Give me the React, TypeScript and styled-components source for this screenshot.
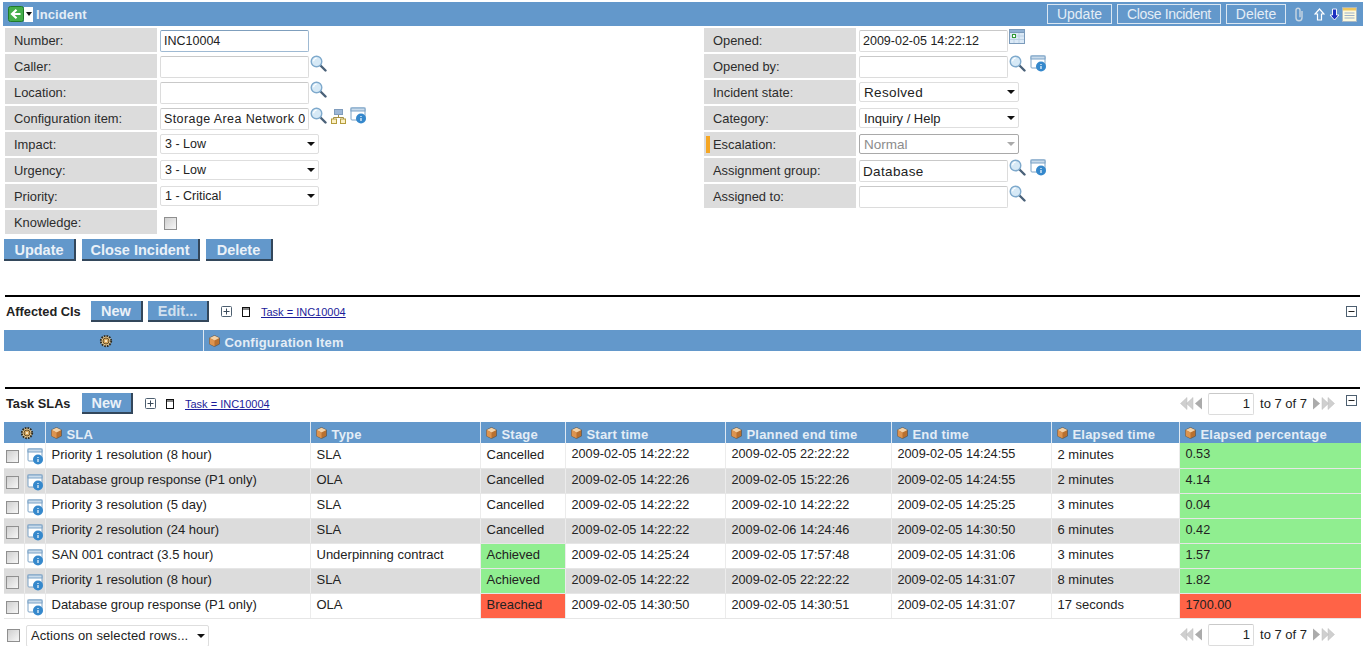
import React from "react";
import styled, { createGlobalStyle } from "styled-components";

const Global = createGlobalStyle`
  html, body { margin: 0; padding: 0; background: #fff; overflow: hidden; height: 646px; }
  body { font-family: "Liberation Sans", Arial, sans-serif; font-size: 13px; color: #222; }
  * { box-sizing: border-box; }
`;

const BLUE = "#6398cb";
const HEAD_TEXT = "#e4edf6";

const Page = styled.div`
  width: 1363px;
  height: 646px;
  padding-top: 2px;
  overflow: hidden;
`;

const Header = styled.div`
  display: flex;
  align-items: center;
  height: 24px;
  margin-left: 3px;
  padding-left: 5px;
  background: ${BLUE};
`;
const HeaderTitle = styled.span`
  margin-left: 3px;
  color: ${HEAD_TEXT};
  font-weight: bold;
  font-size: 13px;
  letter-spacing: 0.1px;
`;
const MenuCaret = styled.span`
  display: flex;
  align-items: center;
  justify-content: center;
  width: 9px;
  height: 15px;
  background: #fff;
  &::after {
    content: "";
    border-left: 3px solid transparent;
    border-right: 3px solid transparent;
    border-top: 4px solid #111;
  }
`;
const HeaderActions = styled.div`
  display: flex;
  align-items: center;
  margin-left: auto;
  gap: 5px;
`;
const HeaderButton = styled.button<{ $w: number; $ls?: number }>`
  height: 20px;
  padding: 1px 0 0;
  width: ${(p) => p.$w}px;
  background: ${BLUE};
  border: 1px solid #dbe7f2;
  color: ${HEAD_TEXT};
  font: 14px "Liberation Sans", Arial, sans-serif;
  letter-spacing: ${(p) => p.$ls ?? 0}px;
  line-height: 17px;
`;
const HeaderIcons = styled.div`
  display: flex;
  align-items: center;
  width: 72px;
  height: 24px;
`;
const IconSlot = styled.span<{ $ml?: number; $mt?: number }>`
  display: inline-flex;
  margin-left: ${(p) => p.$ml ?? 0}px;
  margin-top: ${(p) => p.$mt ?? 0}px;
`;

const FormGrid = styled.div`
  display: grid;
  grid-template-columns: 699px 1fr;
  margin: 2px 0 0 5px;
`;
const FormColumn = styled.div`
  display: flex;
  flex-direction: column;
`;
const Row = styled.div`
  display: flex;
  height: 26px;
  align-items: flex-start;
`;
const Label = styled.div<{ $mark?: boolean }>`
  display: flex;
  align-items: center;
  flex: 0 0 152px;
  height: 24px;
  padding-left: ${(p) => (p.$mark ? 2 : 9)}px;
  padding-top: 1px;
  background: #dcdcdc;
  color: #2c2c2c;
  font-size: 12.9px;
`;
const Mark = styled.span`
  width: 4px;
  height: 17px;
  margin-right: 3px;
  background: #f5a623;
`;
const Field = styled.div`
  display: flex;
  align-items: flex-start;
  margin-left: 3px;
  padding-top: 2px;
`;
const TextInput = styled.input<{ $focus?: boolean; $right?: boolean; $w?: number; $fs?: number; $ls?: number }>`
  width: ${(p) => p.$w ?? 149}px;
  height: 22px;
  padding: 0 3px 0 3px;
  border: 1px solid #dcdcdc;
  border-top-color: #c9c9c9;
  ${(p) => p.$focus && "border-color: #9fbad3; border-top-color: #7f9fbd;"}
  border-radius: 2px;
  background: #fff;
  color: #222;
  font: ${(p) => p.$fs ?? 12.5}px "Liberation Sans", Arial, sans-serif;
  letter-spacing: ${(p) => p.$ls ?? 0}px;
  text-align: ${(p) => (p.$right ? "right" : "left")};
  outline: none;
`;
const FieldIcons = styled.div`
  display: flex;
  align-items: flex-start;
  gap: 4px;
  margin-left: 1px;
  margin-top: -1px;
`;
const SelectBox = styled.div<{ $w?: number; $h?: number; $disabled?: boolean; $fs?: number; $ls?: number }>`
  display: flex;
  align-items: center;
  width: ${(p) => p.$w ?? 160}px;
  height: ${(p) => p.$h ?? 20}px;
  padding: 0 3px 0 4px;
  border: 1px solid ${(p) => (p.$disabled ? "#a9a9a9" : "#dedede")};
  border-radius: 2px;
  background: #fff;
  color: ${(p) => (p.$disabled ? "#8c8c8c" : "#222")};
  font-size: ${(p) => p.$fs ?? 12.5}px;
  letter-spacing: ${(p) => p.$ls ?? 0}px;
  white-space: nowrap;
  &::after {
    content: "";
    margin-left: auto;
    border-left: 4px solid transparent;
    border-right: 4px solid transparent;
    border-top: 4px solid ${(p) => (p.$disabled ? "#aaa" : "#111")};
  }
`;
const Check = styled.span<{ $ml?: number; $mt?: number }>`
  display: block;
  flex: none;
  width: 13px;
  height: 13px;
  margin-left: ${(p) => p.$ml ?? 0}px;
  margin-top: ${(p) => p.$mt ?? 0}px;
  border: 1px solid #8f8f8f;
  background: linear-gradient(135deg, #cfcfcf, #f7f7f7);
`;

const FormButtons = styled.div`
  display: flex;
  gap: 6px;
  margin: 3px 0 0 4px;
`;
const BlueButton = styled.button<{ $w: number; $h?: number; $muted?: boolean }>`
  width: ${(p) => p.$w}px;
  height: ${(p) => p.$h ?? 22}px;
  padding: 1px 0 0;
  background: ${BLUE};
  border: 0;
  border-right: 2px solid #33475b;
  border-bottom: 2px solid #33475b;
  color: ${(p) => (p.$muted ? "#d2e0ee" : "#eaf1f8")};
  font: bold 14.5px "Liberation Sans", Arial, sans-serif;
`;

const Section = styled.section<{ $mt: number }>`
  margin-top: ${(p) => p.$mt}px;
`;
const Rule = styled.div`
  height: 2px;
  margin: 0 3px 0 5px;
  background: #000;
`;
const Toolbar = styled.div`
  display: flex;
  align-items: center;
  height: 33px;
  padding: 0 6px 4px 6px;
`;
const ToolbarTitle = styled.span<{ $w: number }>`
  flex: 0 0 ${(p) => p.$w}px;
  font-weight: bold;
  font-size: 12.8px;
  color: #222;
`;
const ToolbarButtons = styled.div`
  display: flex;
  gap: 5px;
  margin-right: 12px;
`;
const ToolTools = styled.div`
  display: flex;
  align-items: center;
  gap: 10px;
`;
const FilterLink = styled.a`
  margin-left: 1px;
  color: #1c1c9a;
  font-size: 11px;
  text-decoration: underline;
`;
const ToolbarEnd = styled.div`
  display: flex;
  align-items: center;
  margin-left: auto;
`;
const Pager = styled.div`
  display: flex;
  align-items: center;
  font-size: 13px;
`;
const PagerText = styled.span`
  margin: 0 6px;
  color: #222;
`;
const Collapse = styled.span<{ $mt?: number }>`
  display: inline-flex;
  margin-left: 11px;
  margin-top: ${(p) => p.$mt ?? 0}px;
`;

const Table = styled.table`
  width: 1357px;
  margin-left: 4px;
  border-collapse: collapse;
  table-layout: fixed;
`;
const Th = styled.th<{ $center?: boolean }>`
  height: 21px;
  padding: 0 0 0 5px;
  background: ${BLUE};
  border-left: 1px solid #dfe9f3;
  color: ${HEAD_TEXT};
  font-size: 13px;
  font-weight: bold;
  text-align: ${(p) => (p.$center ? "center" : "left")};
  white-space: nowrap;
  letter-spacing: 0.2px;
  &:first-child { border-left: 0; }
`;
const HeadInner = styled.span`
  display: flex;
  align-items: flex-start;
  gap: 5px;
`;
const HeadText = styled.span`
  margin-top: 4px;
  line-height: 15px;
`;
const GearWrap = styled.span`
  display: flex;
  justify-content: center;
`;
const Tr = styled.tr<{ $alt: boolean }>`
  background: ${(p) => (p.$alt ? "#dcdcdc" : "#fff")};
`;
const Td = styled.td<{ $tone?: "ok" | "bad"; $num?: boolean }>`
  height: 25px;
  padding: 0 0 2px 6px;
  border-left: 1px solid #ececec;
  border-bottom: 1px solid #e6e6e6;
  font-size: ${(p) => (p.$num ? 12.7 : 13)}px;
  color: #222;
  white-space: nowrap;
  overflow: hidden;
  background: ${(p) => (p.$tone === "ok" ? "#90ee90" : p.$tone === "bad" ? "#ff6347" : "transparent")};
`;
const IconTd = styled.td`
  height: 25px;
  padding: 5px 0 0 2px;
  vertical-align: top;
  border-left: 1px solid #ececec;
  border-bottom: 1px solid #e6e6e6;
`;
const CheckTd = styled.td`
  height: 25px;
  padding: 7px 0 0 2px;
  vertical-align: top;
  border-bottom: 1px solid #e6e6e6;
`;
const Footer = styled.div`
  display: flex;
  align-items: flex-start;
  padding: 6px 28px 0 7px;
`;
const BottomPager = styled.div`
  margin-left: auto;
  margin-top: -1px;
`;

const Svg = styled.svg`
  display: block;
  flex: none;
`;

const Magnifier = () => (
  <Svg width="17" height="17" viewBox="0 0 17 17">
    <path d="M10.5 10.5l5 5" stroke="#4a6178" strokeWidth="2.4" strokeLinecap="round" />
    <circle cx="6.5" cy="6.5" r="5.3" fill="#d6e9f6" stroke="#7ea9cc" strokeWidth="1.4" />
    <path d="M3.6 6.2a3 3 0 0 1 3-3" stroke="#fff" strokeWidth="1.2" fill="none" />
  </Svg>
);
const InfoWindow = () => (
  <Svg width="17" height="17" viewBox="0 0 17 17">
    <rect x="1" y="1" width="14" height="12" rx="1" fill="#fff" stroke="#7ba2c6" />
    <rect x="1" y="1" width="14" height="3" fill="#c9dbeb" stroke="#7ba2c6" />
    <circle cx="11" cy="11.5" r="5" fill="#3588cc" />
    <path d="M11 9v1M11 11v3" stroke="#e8f3fb" strokeWidth="1.3" />
  </Svg>
);
const Tree = () => (
  <Svg width="15" height="15" viewBox="0 0 15 15">
    <rect x="3.5" y="0.5" width="8" height="5" fill="#9db7d6" stroke="#7f9cbd" />
    <path d="M7.5 6v2.5M2.5 10.5v-2h10v2" fill="none" stroke="#a38f45" />
    <rect x="0.5" y="10" width="5" height="4.5" fill="#fbf0c4" stroke="#b59c3c" />
    <rect x="9.5" y="10" width="5" height="4.5" fill="#fbf0c4" stroke="#b59c3c" />
  </Svg>
);
const Calendar = () => (
  <Svg width="16" height="16" viewBox="0 0 16 16">
    <rect x="0.5" y="0.5" width="15" height="14" fill="#dbe9f6" stroke="#7b9bbb" />
    <rect x="0.5" y="0.5" width="15" height="3" fill="#8fb0d2" stroke="#7b9bbb" />
    <path d="M1 7h14M1 10.5h14M5 4v10M10 4v10" stroke="#bdd2e5" />
    <rect x="3.5" y="5.5" width="3" height="3" fill="#fff" stroke="#2f9a35" />
  </Svg>
);
const Cube = () => (
  <Svg width="11" height="12" viewBox="0 0 10 11">
    <path d="M5 .4l4.6 2.3v5.6L5 10.6.4 8.3V2.7z" fill="#b9702f" stroke="#5c5a56" strokeWidth=".7" />
    <path d="M.6 2.7L5 5l4.4-2.3L5 .6z" fill="#f3d2a8" />
    <path d="M5 5v5.4L.6 8.2V2.7z" fill="#dd9450" />
  </Svg>
);
const Gear = () => (
  <Svg width="14" height="14" viewBox="0 0 13 13">
    <circle cx="6.5" cy="6.5" r="4.8" fill="#e6c890" stroke="#2e2a20" strokeWidth="1.8" strokeDasharray="1.5 1" />
    <circle cx="6.5" cy="6.5" r="2.8" fill="#d7a860" stroke="#55401d" strokeWidth=".8" />
    <circle cx="6.5" cy="6.5" r="1" fill="#fff2d6" />
  </Svg>
);
const BackArrow = () => (
  <Svg width="16" height="16" viewBox="0 0 16 16">
    <rect x="0.5" y="0.5" width="15" height="15" rx="2" fill="#44ad4a" stroke="#1f7a2a" />
    <path d="M12.5 8H5M8.5 3.8L4 8l4.5 4.2" fill="none" stroke="#fff" strokeWidth="2.2" />
  </Svg>
);
const Paperclip = () => (
  <Svg width="10" height="15" viewBox="0 0 10 15">
    <path d="M8 4v6.8a3 3 0 0 1-6 0V3.2a2 2 0 0 1 4 0v7" fill="none" stroke="#c9d6e2" strokeWidth="1.4" />
  </Svg>
);
const ArrowUp = () => (
  <Svg width="11" height="13" viewBox="0 0 11 13">
    <path d="M5.5 1L1 6h2.5v6h4V6H10z" fill="#6d9dcc" stroke="#fff" strokeWidth="1.2" />
  </Svg>
);
const ArrowDown = () => (
  <Svg width="11" height="13" viewBox="0 0 11 13">
    <path d="M5.5 12L1 7h2.5V1h4v6H10z" fill="#1a2fc0" stroke="#eef4f9" strokeWidth="1" />
  </Svg>
);
const Notes = () => (
  <Svg width="15" height="15" viewBox="0 0 15 15">
    <rect x="0.5" y="0.5" width="14" height="14" fill="#fdf9dc" stroke="#a9b8c4" />
    <rect x="1" y="1" width="13" height="2.5" fill="#efc65f" />
    <path d="M2.5 6h10M2.5 8.5h10M2.5 11h10" stroke="#9db1c8" />
  </Svg>
);
const PlusBox = () => (
  <Svg width="11" height="11" viewBox="0 0 11 11">
    <rect x="0.5" y="0.5" width="10" height="10" rx="1" fill="#fff" stroke="#4d5f70" />
    <path d="M2.5 5.5h6M5.5 2.5v6" stroke="#3a4a5a" />
  </Svg>
);
const MinusBox = () => (
  <Svg width="11" height="11" viewBox="0 0 11 11">
    <rect x="0.5" y="0.5" width="10" height="10" fill="#fff" stroke="#4d5f70" />
    <path d="M2.5 5.5h6" stroke="#222" />
  </Svg>
);
const WindowBox = () => (
  <Svg width="8" height="10" viewBox="0 0 8 10">
    <rect x="0.5" y="0.5" width="7" height="9" fill="#fff" stroke="#111" />
    <path d="M0 2h8" stroke="#111" />
  </Svg>
);
const PagerArrows = ({ dir }: { dir: "back" | "forward" }) => (
  <Svg width="22" height="13" viewBox="0 0 22 13">
    <g transform={dir === "forward" ? "translate(22 0) scale(-1 1)" : undefined}>
      <path d="M7 .5L.5 6.5 7 12.5zM13 .5L6.5 6.5 13 12.5z" fill="#cfcfcf" stroke="#bcbcbc" strokeWidth=".5" />
      <path d="M22 .5L15 6.5l7 6z" fill="#ababab" />
    </g>
  </Svg>
);

type LeftRow = { label: string; kind: "input" | "select" | "check"; value?: string; focus?: boolean; ls?: number; icons?: React.ReactNode[] };
const leftRows: LeftRow[] = [
  { label: "Number:", kind: "input", value: "INC10004", focus: true },
  { label: "Caller:", kind: "input", value: "", icons: [<Magnifier key="m" />] },
  { label: "Location:", kind: "input", value: "", icons: [<Magnifier key="m" />] },
  {
    label: "Configuration item:",
    kind: "input",
    value: "Storage Area Network 001",
    ls: 0.4,
    icons: [<Magnifier key="m" />, <IconSlot key="t" $mt={2}><Tree /></IconSlot>, <InfoWindow key="i" />],
  },
  { label: "Impact:", kind: "select", value: "3 - Low" },
  { label: "Urgency:", kind: "select", value: "3 - Low" },
  { label: "Priority:", kind: "select", value: "1 - Critical" },
  { label: "Knowledge:", kind: "check" },
];
type RightRow = { label: string; kind: "input" | "select"; value: string; mark?: boolean; disabled?: boolean; fs?: number; ls?: number; icons?: React.ReactNode[] };
const rightRows: RightRow[] = [
  { label: "Opened:", kind: "input", value: "2009-02-05 14:22:12", icons: [<Calendar key="c" />] },
  { label: "Opened by:", kind: "input", value: "", icons: [<Magnifier key="m" />, <InfoWindow key="i" />] },
  { label: "Incident state:", kind: "select", value: "Resolved", fs: 13.5, ls: 0.35 },
  { label: "Category:", kind: "select", value: "Inquiry / Help", fs: 13 },
  { label: "Escalation:", kind: "select", value: "Normal", mark: true, disabled: true, fs: 13.5 },
  { label: "Assignment group:", kind: "input", value: "Database", fs: 13.5, ls: 0.35, icons: [<Magnifier key="m" />, <InfoWindow key="i" />] },
  { label: "Assigned to:", kind: "input", value: "", icons: [<Magnifier key="m" />] },
];

const columns = [
  { title: "SLA", w: 265 },
  { title: "Type", w: 170 },
  { title: "Stage", w: 85 },
  { title: "Start time", w: 160 },
  { title: "Planned end time", w: 166 },
  { title: "End time", w: 160 },
  { title: "Elapsed time", w: 128 },
  { title: "Elapsed percentage", w: 182 },
];

type Sla = { sla: string; type: string; stage: string; start: string; planned: string; end: string; elapsed: string; pct: string; stageTone?: "ok" | "bad"; pctTone: "ok" | "bad" };
const slas: Sla[] = [
  { sla: "Priority 1 resolution (8 hour)", type: "SLA", stage: "Cancelled", start: "2009-02-05 14:22:22", planned: "2009-02-05 22:22:22", end: "2009-02-05 14:24:55", elapsed: "2 minutes", pct: "0.53", pctTone: "ok" },
  { sla: "Database group response (P1 only)", type: "OLA", stage: "Cancelled", start: "2009-02-05 14:22:26", planned: "2009-02-05 15:22:26", end: "2009-02-05 14:24:55", elapsed: "2 minutes", pct: "4.14", pctTone: "ok" },
  { sla: "Priority 3 resolution (5 day)", type: "SLA", stage: "Cancelled", start: "2009-02-05 14:22:22", planned: "2009-02-10 14:22:22", end: "2009-02-05 14:25:25", elapsed: "3 minutes", pct: "0.04", pctTone: "ok" },
  { sla: "Priority 2 resolution (24 hour)", type: "SLA", stage: "Cancelled", start: "2009-02-05 14:22:22", planned: "2009-02-06 14:24:46", end: "2009-02-05 14:30:50", elapsed: "6 minutes", pct: "0.42", pctTone: "ok" },
  { sla: "SAN 001 contract (3.5 hour)", type: "Underpinning contract", stage: "Achieved", stageTone: "ok", start: "2009-02-05 14:25:24", planned: "2009-02-05 17:57:48", end: "2009-02-05 14:31:06", elapsed: "3 minutes", pct: "1.57", pctTone: "ok" },
  { sla: "Priority 1 resolution (8 hour)", type: "SLA", stage: "Achieved", stageTone: "ok", start: "2009-02-05 14:22:22", planned: "2009-02-05 22:22:22", end: "2009-02-05 14:31:07", elapsed: "8 minutes", pct: "1.82", pctTone: "ok" },
  { sla: "Database group response (P1 only)", type: "OLA", stage: "Breached", stageTone: "bad", start: "2009-02-05 14:30:50", planned: "2009-02-05 14:30:51", end: "2009-02-05 14:31:07", elapsed: "17 seconds", pct: "1700.00", pctTone: "bad" },
];

const PagerBlock = () => (
  <Pager>
    <PagerArrows dir="back" />
    <IconSlot $ml={6}>
      <TextInput $right $w={46} $fs={13} defaultValue="1" />
    </IconSlot>
    <PagerText>to 7 of 7</PagerText>
    <PagerArrows dir="forward" />
  </Pager>
);

export default function App() {
  return (
    <Page>
      <Global />
      <Header>
        <BackArrow />
        <MenuCaret />
        <HeaderTitle>Incident</HeaderTitle>
        <HeaderActions>
          <HeaderButton $w={65}>Update</HeaderButton>
          <HeaderButton $w={104} $ls={-0.35}>Close Incident</HeaderButton>
          <HeaderButton $w={60}>Delete</HeaderButton>
          <HeaderIcons>
            <IconSlot $ml={3}><Paperclip /></IconSlot>
            <IconSlot $ml={10}><ArrowUp /></IconSlot>
            <IconSlot $ml={4}><ArrowDown /></IconSlot>
            <IconSlot $ml={2}><Notes /></IconSlot>
          </HeaderIcons>
        </HeaderActions>
      </Header>

      <FormGrid>
        <FormColumn>
          {leftRows.map((r) => (
            <Row key={r.label}>
              <Label>{r.label}</Label>
              <Field>
                {r.kind === "input" && <TextInput $focus={r.focus} $ls={r.ls} defaultValue={r.value} />}
                {r.kind === "select" && <SelectBox $w={159}>{r.value}</SelectBox>}
                {r.kind === "check" && <Check $ml={4} $mt={5} />}
                {r.icons && <FieldIcons>{r.icons}</FieldIcons>}
              </Field>
            </Row>
          ))}
        </FormColumn>
        <FormColumn>
          {rightRows.map((r) => (
            <Row key={r.label}>
              <Label $mark={r.mark}>
                {r.mark && <Mark />}
                {r.label}
              </Label>
              <Field>
                {r.kind === "input" ? (
                  <TextInput $fs={r.fs} $ls={r.ls} defaultValue={r.value} />
                ) : (
                  <SelectBox $disabled={r.disabled} $fs={r.fs} $ls={r.ls}>{r.value}</SelectBox>
                )}
                {r.icons && <FieldIcons>{r.icons}</FieldIcons>}
              </Field>
            </Row>
          ))}
        </FormColumn>
      </FormGrid>

      <FormButtons>
        <BlueButton $w={72}>Update</BlueButton>
        <BlueButton $w={118}>Close Incident</BlueButton>
        <BlueButton $w={67}>Delete</BlueButton>
      </FormButtons>

      <Section $mt={34}>
        <Rule />
        <Toolbar>
          <ToolbarTitle $w={85}>Affected CIs</ToolbarTitle>
          <ToolbarButtons>
            <BlueButton $w={52} $h={21}>New</BlueButton>
            <BlueButton $w={61} $h={21} $muted>Edit...</BlueButton>
          </ToolbarButtons>
          <ToolTools>
            <PlusBox />
            <WindowBox />
            <FilterLink>Task = INC10004</FilterLink>
          </ToolTools>
          <ToolbarEnd>
            <Collapse><MinusBox /></Collapse>
          </ToolbarEnd>
        </Toolbar>
        <Table>
          <colgroup>
            <col width={199} />
            <col />
          </colgroup>
          <thead>
            <tr>
              <Th $center><GearWrap><Gear /></GearWrap></Th>
              <Th><HeadInner><IconSlot $mt={4}><Cube /></IconSlot><HeadText>Configuration Item</HeadText></HeadInner></Th>
            </tr>
          </thead>
        </Table>
      </Section>

      <Section $mt={36}>
        <Rule />
        <Toolbar>
          <ToolbarTitle $w={76}>Task SLAs</ToolbarTitle>
          <ToolbarButtons>
            <BlueButton $w={51} $h={21}>New</BlueButton>
          </ToolbarButtons>
          <ToolTools>
            <PlusBox />
            <WindowBox />
            <FilterLink>Task = INC10004</FilterLink>
          </ToolTools>
          <ToolbarEnd>
            <PagerBlock />
            <Collapse $mt={-6}><MinusBox /></Collapse>
          </ToolbarEnd>
        </Toolbar>
        <Table>
          <colgroup>
            <col width={20} />
            <col width={21} />
            {columns.map((c) => <col key={c.title} width={c.w} />)}
          </colgroup>
          <thead>
            <tr>
              <Th colSpan={2} $center><GearWrap><Gear /></GearWrap></Th>
              {columns.map((c) => (
                <Th key={c.title}>
                  <HeadInner><IconSlot $mt={4}><Cube /></IconSlot><HeadText>{c.title}</HeadText></HeadInner>
                </Th>
              ))}
            </tr>
          </thead>
          <tbody>
            {slas.map((s, i) => (
              <Tr key={i} $alt={i % 2 === 1}>
                <CheckTd><Check /></CheckTd>
                <IconTd><InfoWindow /></IconTd>
                <Td>{s.sla}</Td>
                <Td>{s.type}</Td>
                <Td $tone={s.stageTone}>{s.stage}</Td>
                <Td $num>{s.start}</Td>
                <Td $num>{s.planned}</Td>
                <Td $num>{s.end}</Td>
                <Td>{s.elapsed}</Td>
                <Td $num $tone={s.pctTone}>{s.pct}</Td>
              </Tr>
            ))}
          </tbody>
        </Table>
        <Footer>
          <Check $mt={4} />
          <IconSlot $ml={6}><SelectBox $w={183} $h={22} $fs={13} $ls={0.1}>Actions on selected rows...</SelectBox></IconSlot>
          <BottomPager><PagerBlock /></BottomPager>
        </Footer>
      </Section>
    </Page>
  );
}
